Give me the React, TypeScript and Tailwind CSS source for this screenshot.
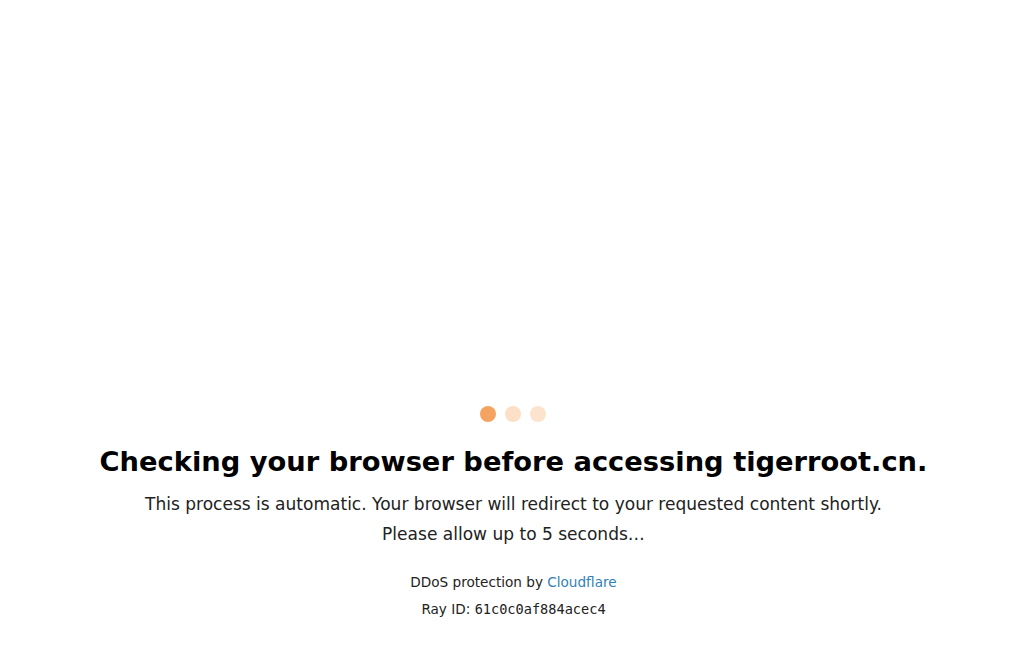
export default function App() {
  return (
    <div className="min-h-[655px] w-full bg-white text-black font-['DejaVu_Sans',sans-serif] flex flex-col items-center pt-[406px] pl-[3px]">
      {/* loading dots */}
      <div className="flex gap-[9px] -ml-[2px]">
        <span className="w-4 h-4 rounded-full bg-[#f4a460]" />
        <span className="w-4 h-4 rounded-full bg-[#fbdfc6]" />
        <span className="w-4 h-4 rounded-full bg-[#fbe3cd]" />
      </div>

      <h1 className="mt-[20px] text-[27.3px] leading-[40px] font-bold text-black">
        Checking your browser before accessing tigerroot.cn.
      </h1>

      <div className="mt-[7px] text-[17.05px] leading-[30px] text-[#222] text-center">
        <p>This process is automatic. Your browser will redirect to your requested content shortly.</p>
        <p>Please allow up to 5 seconds…</p>
      </div>

      <div className="mt-[20px] text-[13.6px] leading-[27px] text-[#222] text-center">
        <p>
          DDoS protection by <a className="text-[#2f81b7]" href="#">Cloudflare</a>
        </p>
        <p>
          Ray ID: <code className="font-['DejaVu_Sans_Mono',monospace]">61c0c0af884acec4</code>
        </p>
      </div>
    </div>
  );
}
